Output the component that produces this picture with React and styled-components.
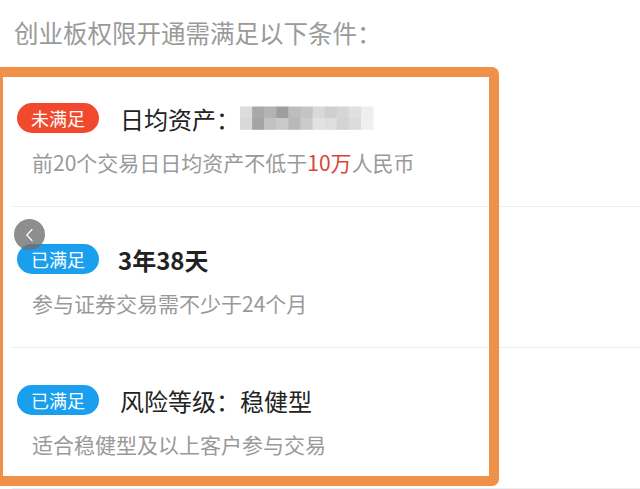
import styled, { createGlobalStyle } from "styled-components";

const GlobalStyle = createGlobalStyle`
  html, body {
    margin: 0;
    padding: 0;
    background: #fff;
  }
  body {
    font-family: "Noto Sans CJK SC", "Noto Sans", sans-serif;
    overflow: hidden;
  }
`;

const Page = styled.div`
  position: relative;
  width: 640px;
  height: 489px;
  overflow: hidden;
  background: #fff;
`;

const Header = styled.div`
  height: 66px;
  padding-left: 14px;
  display: flex;
  align-items: center;
  box-sizing: border-box;
  padding-bottom: 2px;
  font-size: 24.5px;
  color: #9a9a9a;
`;

const List = styled.div`
  display: flex;
  flex-direction: column;
`;

const Row = styled.div`
  margin-left: 12px;
  height: 141px;
  box-sizing: border-box;
  padding: 37px 0 0 5px;
  border-bottom: 1px solid #eeeeee;
`;

const Line = styled.div`
  display: flex;
  align-items: center;
  height: 30px;
`;

const Badge = styled.span`
  width: 82px;
  height: 30px;
  border-radius: 15px;
  background: ${(p) => (p.$ok ? "#1a9fee" : "#f1492d")};
  color: #fff;
  font-size: 18px;
  display: flex;
  align-items: center;
  justify-content: center;
  flex-shrink: 0;
`;

const Title = styled.span`
  margin-left: ${(p) => (p.$bold ? "19px" : "21px")};
  font-size: 24px;
  color: #222;
  font-weight: ${(p) => (p.$bold ? 700 : 400)};
  white-space: nowrap;
`;

const Sub = styled.div`
  margin-top: 15px;
  padding-left: 15px;
  font-size: 21px;
  line-height: 28px;
  color: #999;
  white-space: nowrap;
`;

const Hi = styled.span`
  color: #d8433a;
`;

const Mosaic = styled.svg`
  margin-left: 0;
  display: block;
  filter: blur(0.7px);
`;

const Highlight = styled.div`
  position: absolute;
  left: -7px;
  top: 67px;
  width: 506px;
  height: 419px;
  box-sizing: border-box;
  border: 10.5px solid #ef9149;
  border-radius: 7px;
  pointer-events: none;
`;

const BackButton = styled.div`
  position: absolute;
  left: 14px;
  top: 219px;
  width: 31px;
  height: 31px;
  border-radius: 50%;
  background: rgba(110, 110, 110, 0.78);
  display: flex;
  align-items: center;
  justify-content: center;
`;

const cells = [
  ["#dcdcdc", "#a9a9a9", "#b3b3b3", "#9e9e9e", "#bdbdbd", "#c4c4c4", "#d9d9d9", "#cfcfcf", "#d6d6d6", "#e0e0e0", "#eeeeee"],
  ["#d8d8d8", "#a4a4a4", "#c2c2c2", "#c9c9c9", "#b8b8b8", "#cbcbcb", "#e2e2e2", "#dedede", "#d3d3d3", "#dcdcdc", "#f0f0f0"],
];

function Redacted() {
  return (
    <Mosaic width="138" height="24" viewBox="0 0 138 24">
      {cells.map((row, r) =>
        row.map((c, i) => (
          <rect key={`${r}-${i}`} x={i * 12.1} y={r * 11.5 + 0.5} width="12.6" height="11.8" fill={c} />
        ))
      )}
    </Mosaic>
  );
}

export default function App() {
  return (
    <Page>
      <GlobalStyle />
      <Header>创业板权限开通需满足以下条件：</Header>
      <List>
        <Row>
          <Line>
            <Badge>未满足</Badge>
            <Title>日均资产：</Title>
            <Redacted />
          </Line>
          <Sub>
            前20个交易日日均资产不低于<Hi>10万</Hi>人民币
          </Sub>
        </Row>
        <Row>
          <Line>
            <Badge $ok>已满足</Badge>
            <Title $bold>3年38天</Title>
          </Line>
          <Sub>参与证券交易需不少于24个月</Sub>
        </Row>
        <Row>
          <Line>
            <Badge $ok>已满足</Badge>
            <Title>风险等级：稳健型</Title>
          </Line>
          <Sub>适合稳健型及以上客户参与交易</Sub>
        </Row>
      </List>
      <BackButton>
        <svg width="16" height="16" viewBox="0 0 16 16" fill="none">
          <path d="M10 2.5 L4.8 8 L10 13.5" stroke="#fff" strokeWidth="1.2" strokeLinecap="round" strokeLinejoin="round" />
        </svg>
      </BackButton>
      <Highlight />
    </Page>
  );
}
